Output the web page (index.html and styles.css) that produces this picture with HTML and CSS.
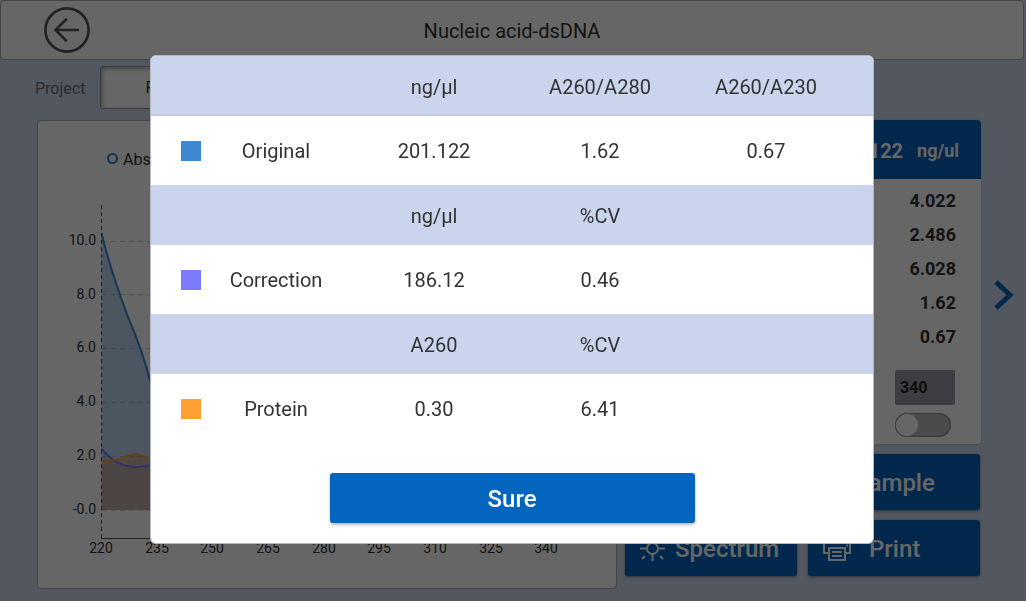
FILE: index.html
```html
<!DOCTYPE html>
<html lang="en">
<head>
    <meta charset="UTF-8">
    <meta name="viewport" content="width=device-width, initial-scale=1.0">
    <title>Nucleic acid-dsDNA</title>
    <link rel="stylesheet" href="styles.css">
</head>
<body>
    <div class="screen">
        <header class="topbar">
            <button class="back-btn" aria-label="Back">
                <svg width="46" height="46" viewBox="0 0 46 46" fill="none" stroke="currentColor" stroke-width="2.6">
                    <circle cx="23" cy="23" r="21.6"/>
                    <path d="M34 23H12M22 12.5L11.500 23L22 33.500" stroke-linecap="round"/>
                </svg>
            </button>
            <h1>Nucleic acid-dsDNA</h1>
        </header>

        <div class="project-row">
            <label for="project">Project</label>
            <input type="text" id="project" value="F">
        </div>

        <main class="content">
            <section class="chart-card">
                <svg class="chart" width="578" height="467" viewBox="0 0 578 467">
                    <g class="legend">
                        <circle cx="74.500" cy="37.500" r="4.500"/>
                        <text x="85" y="44">Abs</text>
                    </g>
                    <g class="grid">
                        <path d="M64 120.500H560M64 173.500H560M64 227.500H560M64 281.500H560M64 335.500H560M64 389.500H560"/>
                    </g>
                    <path class="area original" d="M63.500 112C70 139 78 164 90 196C99 217 107 239 113 263C120 291 130 314 150 329V389H63.500Z"/>
                    <path class="area correction" d="M63.500 328C75 341 85 346 98 346C110 346 120 342 150 339V389H63.500Z"/>
                    <path class="area protein" d="M63.500 340C73 339 80 340 87 336C95 332 101 332 107 336C115 341 125 345 150 347V389H63.500Z"/>
                    <path class="line original" d="M63.500 112C70 139 78 164 90 196C99 217 107 239 113 263C120 291 130 314 150 329"/>
                    <path class="line correction" d="M63.500 328C75 341 85 346 98 346C110 346 120 342 150 339"/>
                    <path class="line protein" d="M63.500 340C73 339 80 340 87 336C95 332 101 332 107 336C115 341 125 345 150 347"/>
                    <path class="y-axis" d="M63.500 84V417"/>
                    <path class="x-axis" d="M63 417.500H560"/>
                    <g class="y-labels">
                        <text x="58" y="124">10.0</text>
                        <text x="58" y="178">8.0</text>
                        <text x="58" y="231">6.0</text>
                        <text x="58" y="285">4.0</text>
                        <text x="58" y="339">2.0</text>
                        <text x="58" y="393">-0.0</text>
                    </g>
                    <g class="x-labels">
                        <text x="63" y="432">220</text>
                        <text x="119" y="432">235</text>
                        <text x="174" y="432">250</text>
                        <text x="230" y="432">265</text>
                        <text x="286" y="432">280</text>
                        <text x="341" y="432">295</text>
                        <text x="397" y="432">310</text>
                        <text x="453" y="432">325</text>
                        <text x="508" y="432">340</text>
                    </g>
                </svg>
            </section>

            <aside class="side">
                <section class="result-card">
                    <div class="result-head">
                        <span>201.122</span>
                        <span>ng/ul</span>
                    </div>
                    <ul class="result-list">
                        <li>4.022</li>
                        <li>2.486</li>
                        <li>6.028</li>
                        <li>1.62</li>
                        <li>0.67</li>
                    </ul>
                    <div class="baseline">
                        <input type="text" class="wavelength" value="340" aria-label="Baseline wavelength">
                        <input type="checkbox" class="switch" aria-label="Baseline correction">
                    </div>
                </section>
                <div class="actions">
                    <button class="action sample">Sample</button>
                    <button class="action">
                        <svg width="26" height="26" viewBox="0 0 26 26" fill="none" stroke="currentColor" stroke-width="2">
                            <circle cx="12.500" cy="12.500" r="5.500"/>
                            <path d="M12.500 1V5M0 12.500H6M19 12.500H25M4.500 4.500L7.500 7.500M20.500 4.500L17.500 7.500M12.500 18V25M5 20L2 23M20 20L23 23"/>
                        </svg>
                        Spectrum
                    </button>
                    <button class="action print">
                        <svg width="28" height="26" viewBox="0 0 28 26" fill="none" stroke="currentColor" stroke-width="2">
                            <path d="M6 7V1H22V7M6 17H1V7H27V17H22"/>
                            <path d="M6 12H22V24H6ZM9 16H19M9 20H19M23 9.500H25"/>
                        </svg>
                        Print
                    </button>
                </div>
            </aside>

            <button class="next-btn" aria-label="Next">
                <svg width="20" height="30" viewBox="0 0 20 30" fill="none" stroke="currentColor" stroke-width="5">
                    <path d="M2 2L16 15L2 28"/>
                </svg>
            </button>
        </main>
    </div>

    <div class="overlay">
        <div class="dialog" role="dialog" aria-modal="true" aria-label="Correction result">
            <table>
                <colgroup>
                    <col class="col-swatch">
                    <col class="col-name">
                    <col>
                    <col>
                    <col>
                    <col class="col-end">
                </colgroup>
                <tr class="head first">
                    <th></th><th></th><th>ng/µl</th><th>A260/A280</th><th>A260/A230</th><th></th>
                </tr>
                <tr>
                    <td><span class="swatch original"></span></td>
                    <td>Original</td><td>201.122</td><td>1.62</td><td>0.67</td><td></td>
                </tr>
                <tr class="head">
                    <th></th><th></th><th>ng/µl</th><th>%CV</th><th></th><th></th>
                </tr>
                <tr>
                    <td><span class="swatch correction"></span></td>
                    <td>Correction</td><td>186.12</td><td>0.46</td><td></td><td></td>
                </tr>
                <tr class="head">
                    <th></th><th></th><th>A260</th><th>%CV</th><th></th><th></th>
                </tr>
                <tr>
                    <td><span class="swatch protein"></span></td>
                    <td>Protein</td><td>0.30</td><td>6.41</td><td></td><td></td>
                </tr>
            </table>
            <button class="sure-btn">Sure</button>
        </div>
    </div>
</body>
</html>
```
FILE: styles.css
```css
* {
    box-sizing: border-box;
}
body {
    margin: 0;
    font-family: Roboto, sans-serif;
    color: #333;
    background-color: #cdd9f0;
}
button {
    border: none;
    font-family: inherit;
    cursor: pointer;
}
input {
    font-family: inherit;
}
.screen {
    min-height: 100vh;
    padding-right: 2px;
}
.topbar {
    display: flex;
    align-items: center;
    height: 60px;
    padding: 0 43px;
    background-color: #fff;
    border: 1px solid #a9acb5;
    border-radius: 4px;
}
.back-btn {
    width: 46px;
    height: 46px;
    padding: 0;
    background: none;
    color: #555;
}
.topbar h1 {
    flex: 1;
    margin: 0;
    padding: 2px 46px 0 0;
    font-size: 20px;
    font-weight: 400;
    line-height: 24px;
    text-align: center;
}
.project-row {
    display: flex;
    align-items: center;
    gap: 15px;
    padding: 6px 35px 11px;
}
.project-row label {
    padding-top: 2px;
    font-size: 16px;
    color: #6a6d75;
}
.project-row input {
    width: 180px;
    height: 43px;
    padding: 0 44px;
    border: 1px solid #999;
    border-radius: 3px;
    box-shadow: inset 1px 2px 4px #aaa;
    font-size: 16px;
    color: #333;
}
.content {
    display: flex;
    align-items: flex-start;
    padding: 0 10px 11px 37px;
}
.chart-card {
    flex: 1;
    min-width: 0;
    background-color: #fff;
    border: 1px solid #aaadb5;
    border-radius: 4px;
}
.chart {
    display: block;
}
.chart text {
    font-size: 14px;
    fill: #333;
}
.legend circle {
    fill: none;
    stroke: #2d7fc4;
    stroke-width: 2;
}
.chart .legend text {
    font-size: 16px;
}
.grid path {
    stroke: #d5d5d5;
    stroke-dasharray: 5 4;
}
.area.original {
    fill: #3d8ad0;
    fill-opacity: 0.35;
}
.area.correction {
    fill: #7b7bff;
    fill-opacity: 0.15;
}
.area.protein {
    fill: #dc7828;
    fill-opacity: 0.35;
}
.line {
    fill: none;
    stroke-width: 2;
}
.line.original {
    stroke: #3d8ad0;
}
.line.correction {
    stroke: #7b7bff;
}
.line.protein {
    stroke: #ffa030;
}
.y-axis {
    stroke: #555;
    stroke-dasharray: 4 3;
}
.x-axis {
    stroke: #555;
}
.y-labels text {
    text-anchor: end;
}
.x-labels text {
    text-anchor: middle;
}
.side {
    width: 356px;
    margin-left: 8px;
}
.result-card {
    height: 324px;
    background-color: #fff;
    border-radius: 4px;
    box-shadow: 0 0 2px #aaa;
}
.result-head {
    display: flex;
    align-items: center;
    justify-content: flex-end;
    gap: 14px;
    height: 59px;
    padding: 2px 22px 0 0;
    background-color: #0365bd;
    border-radius: 4px 4px 0 0;
    color: #fff;
    font-size: 20px;
    font-weight: 700;
}
.result-head span:last-child {
    font-size: 18px;
}
.result-list {
    margin: 0;
    padding: 5px 25px 0 0;
    list-style: none;
    font-size: 18px;
    font-weight: 700;
    line-height: 34px;
    text-align: right;
}
.baseline {
    display: flex;
    flex-direction: column;
    gap: 8px;
    width: 60px;
    margin: 16px 26px 0 auto;
}
.wavelength {
    width: 60px;
    height: 35px;
    padding: 0 5px;
    border: none;
    border-radius: 2px;
    background-color: #9c99a6;
    font-size: 16px;
    font-weight: 700;
    color: #222;
}
.switch {
    appearance: none;
    width: 56px;
    height: 24px;
    margin: 0;
    border-radius: 12px;
    background-color: #bbb;
    box-shadow: inset 0 0 2px #333;
}
.switch::before {
    content: "";
    display: block;
    width: 22px;
    height: 22px;
    margin: 1px;
    border-radius: 50%;
    background-color: #fff;
}
.actions {
    display: grid;
    grid-template-columns: 1fr 1fr;
    gap: 10px 11px;
    margin-top: 10px;
    padding-right: 1px;
}
.action {
    display: flex;
    align-items: center;
    gap: 9px;
    height: 56px;
    padding: 2px 15px 0;
    background-color: #0365bd;
    border-radius: 3px;
    box-shadow: 0 1px 3px #777;
    color: #fff;
    font-size: 24px;
    font-weight: 500;
}
.action.sample {
    grid-column: 2;
    padding-left: 46px;
}
.action.print {
    gap: 18px;
}
.next-btn {
    width: 20px;
    height: 30px;
    margin: 160px 0 0 13px;
    padding: 0;
    background: none;
    color: #0365bd;
}
.overlay {
    position: fixed;
    inset: 0;
    display: flex;
    justify-content: center;
    align-items: center;
    padding: 0 2px 2px 0;
    background-color: rgba(0, 0, 0, 0.6);
}
.dialog {
    width: 724px;
    max-width: 96%;
    padding-bottom: 20px;
    background-color: #fff;
    border: 1px solid #b4b7c4;
    border-radius: 6px;
    overflow: hidden;
}
.dialog table {
    width: 100%;
    table-layout: fixed;
    border-collapse: collapse;
    font-size: 20px;
}
.col-swatch {
    width: 50px;
}
.col-name {
    width: 150px;
}
.col-end {
    width: 24px;
}
.dialog th,
.dialog td {
    height: 69px;
    padding: 0;
    font-weight: 400;
    text-align: center;
}
.dialog th {
    height: 60px;
    padding-top: 2px;
}
.dialog .head {
    background-color: #cad4ec;
}
.dialog .first {
    box-shadow: inset 0 -2px #c3cadb;
}
.swatch {
    display: block;
    width: 20px;
    height: 20px;
    margin-left: 30px;
}
.swatch.original {
    background-color: #3d8ad0;
}
.swatch.correction {
    background-color: #7b7bff;
}
.swatch.protein {
    background-color: #ffa030;
}
.sure-btn {
    display: block;
    width: 365px;
    height: 50px;
    margin: 30px auto 0;
    padding: 2px 0 0;
    background-color: #0365bd;
    border-radius: 3px;
    box-shadow: 0 2px 3px #bbb;
    color: #fff;
    font-size: 24px;
    font-weight: 500;
}
```
